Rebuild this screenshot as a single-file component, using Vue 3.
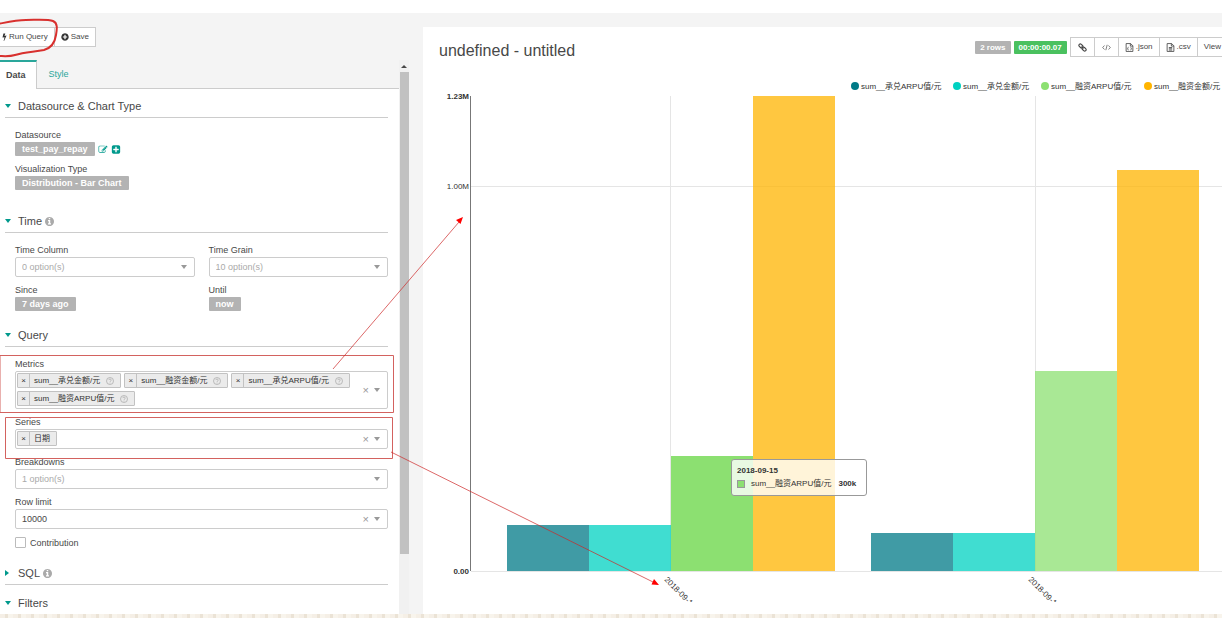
<script setup>
import { ref } from 'vue'

const metrics = ref(['sum__承兑金额/元', 'sum__融资金额/元', 'sum__承兑ARPU值/元', 'sum__融资ARPU值/元'])
const series = ref(['日期'])
const contribution = ref(false)

const legend = [
  { name: 'sum__承兑ARPU值/元', color: '#007a87', x: 432 },
  { name: 'sum__承兑金额/元', color: '#00d1c1', x: 534 },
  { name: 'sum__融资ARPU值/元', color: '#8ce071', x: 622 },
  { name: 'sum__融资金额/元', color: '#ffb400', x: 725 },
]

const baseline = 509
const barWidth = 82
const groups = [
  { x: 84, date: '2018-09-15', heights: [46, 46, 115, 475] },
  { x: 448, date: '2018-09-14', heights: [38, 38, 200, 401] },
]
const hovered = { group: 0, bar: 2 }

const icons = {
  bolt: 'M1333 566q18 20 7 44l-540 1157q-13 25-42 25-4 0-14-2-17-5-25.5-19t-4.5-30l197-808-406 101q-4 1-12 1-18 0-31-11-18-15-13-39l201-825q4-16 18-26t32-10h328q19 0 32 12.5t13 29.5q0 8-5 18l-171 463 396-98q8-2 12-2 19 0 34 15z',
  info: 'M1152 1376v-160q0-14-9-23t-23-9h-96v-512q0-14-9-23t-23-9h-320q-14 0-23 9t-9 23v160q0 14 9 23t23 9h96v320h-96q-14 0-23 9t-9 23v160q0 14 9 23t23 9h448q14 0 23-9t9-23zm-128-896v-160q0-14-9-23t-23-9h-192q-14 0-23 9t-9 23v160q0 14 9 23t23 9h192q14 0 23-9t9-23zm640 416q0 209-103 385.5t-279.5 279.5-385.5 103-385.5-103-279.5-279.5-103-385.5 103-385.5 279.5-279.5 385.5-103 385.5 103 279.5 279.5 103 385.5z',
  plusCircle: 'M1344 960v-128q0-26-19-45t-45-19h-256v-256q0-26-19-45t-45-19h-128q-26 0-45 19t-19 45v256h-256q-26 0-45 19t-19 45v128q0 26 19 45t45 19h256v256q0 26 19 45t45 19h128q26 0 45-19t19-45v-256h256q26 0 45-19t19-45zm320-64q0 209-103 385.5t-279.5 279.5-385.5 103-385.5-103-279.5-279.5-103-385.5 103-385.5 279.5-279.5 385.5-103 385.5 103 279.5 279.5 103 385.5z',
  edit: 'M888 1184l116-116-152-152-116 116v56h96v96h56zm440-720q-16-16-33 1l-350 350q-17 17-1 33t33-1l350-350q17-17 1-33zm80 594v190q0 119-84.5 203.5t-203.5 84.5h-832q-119 0-203.5-84.5t-84.5-203.5v-832q0-119 84.5-203.5t203.5-84.5h832q63 0 117 25 15 7 18 23 3 17-9 29l-49 49q-14 14-32 8-23-6-45-6h-832q-66 0-113 47t-47 113v832q0 66 47 113t113 47h832q66 0 113-47t47-113v-126q0-13 9-22l64-64q15-15 35-7t20 29zm-96-738l288 288-672 672h-288v-288zm444 132l-92 92-288-288 92-92q28-28 68-28t68 28l152 152q28 28 28 68t-28 68z',
  plusSquare: 'M1408 960v-128q0-26-19-45t-45-19h-320v-320q0-26-19-45t-45-19h-128q-26 0-45 19t-19 45v320h-320q-26 0-45 19t-19 45v128q0 26 19 45t45 19h320v320q0 26 19 45t45 19h128q26 0 45-19t19-45v-320h320q26 0 45-19t19-45zm256-544v960q0 119-84.5 203.5t-203.5 84.5h-960q-119 0-203.5-84.5t-84.5-203.5v-960q0-119 84.5-203.5t203.5-84.5h960q119 0 203.5 84.5t84.5 203.5z',
}
</script>

<template>
  <div class="page">
    <div class="topbar"></div>
    <main class="explore">
      <aside class="sidebar">
        <div class="actions">
          <button class="btn run" type="button">
            <svg class="ico small" viewBox="400 0 1000 1792"><path :d="icons.bolt" /></svg>Run Query
          </button>
          <button class="btn save" type="button">
            <svg class="ico" viewBox="64 64 1664 1664"><path :d="icons.plusCircle" /></svg>Save
          </button>
        </div>

        <div class="panel-wrap">
          <div class="panel">
            <nav class="tabs">
              <a class="tab active" href="#data">Data</a>
              <a class="tab" href="#style">Style</a>
            </nav>

            <section class="section first">
              <h2 class="heading"><i class="caret"></i>Datasource &amp; Chart Type</h2>
              <div class="fields">
                <div class="field">
                  <div class="label">Datasource</div>
                  <div class="badge-row">
                    <button class="badge" type="button">test_pay_repay</button>
                    <a class="icon-link" href="#edit" aria-label="Edit datasource"><svg viewBox="0 0 1792 1792"><path :d="icons.edit" /></svg></a>
                    <a class="icon-link" href="#add" aria-label="Add datasource"><svg viewBox="64 64 1664 1664"><path :d="icons.plusSquare" /></svg></a>
                  </div>
                </div>
                <div class="field">
                  <div class="label">Visualization Type</div>
                  <div class="badge-row"><button class="badge" type="button">Distribution - Bar Chart</button></div>
                </div>
              </div>
            </section>

            <section class="section">
              <h2 class="heading"><i class="caret"></i>Time<svg class="info" viewBox="128 128 1536 1536"><path :d="icons.info" /></svg></h2>
              <div class="fields two">
                <div class="field">
                  <label class="label" for="time-column">Time Column</label>
                  <div class="control">
                    <select id="time-column" class="muted"><option>0 option(s)</option></select>
                    <i class="arrow"></i>
                  </div>
                </div>
                <div class="field">
                  <label class="label" for="time-grain">Time Grain</label>
                  <div class="control">
                    <select id="time-grain" class="muted"><option>10 option(s)</option></select>
                    <i class="arrow"></i>
                  </div>
                </div>
                <div class="field">
                  <div class="label">Since</div>
                  <div class="badge-row"><button class="badge" type="button">7 days ago</button></div>
                </div>
                <div class="field">
                  <div class="label">Until</div>
                  <div class="badge-row"><button class="badge" type="button">now</button></div>
                </div>
              </div>
            </section>

            <section class="section">
              <h2 class="heading"><i class="caret"></i>Query</h2>
              <div class="fields">
                <div class="field">
                  <label class="label" for="metrics">Metrics</label>
                  <div class="control">
                    <div class="tags">
                      <span v-for="m in metrics" :key="m" class="tag">
                        <button class="remove" type="button" :aria-label="'Remove ' + m" @click="metrics = metrics.filter(x => x !== m)">×</button>
                        <span class="tag-text">{{ m }}</span>
                        <svg class="help" viewBox="0 0 16 16"><circle cx="8" cy="8" r="7" /><path d="M5.5 6.2C5.7 3.2 10.500 3.500 10.500 6.200C10.500 8 8 7.800 8 9.800M8 11.200V12.800" /></svg>
                      </span>
                      <input id="metrics" class="entry" type="text" />
                    </div>
                    <button class="clear" type="button" aria-label="Clear metrics" @click="metrics = []">×</button>
                    <i class="arrow"></i>
                  </div>
                </div>
                <div class="field">
                  <label class="label" for="series">Series</label>
                  <div class="control">
                    <div class="tags">
                      <span v-for="s in series" :key="s" class="tag">
                        <button class="remove" type="button" :aria-label="'Remove ' + s" @click="series = []">×</button>
                        <span class="tag-text">{{ s }}</span>
                      </span>
                      <input id="series" class="entry" type="text" />
                    </div>
                    <button class="clear" type="button" aria-label="Clear series" @click="series = []">×</button>
                    <i class="arrow"></i>
                  </div>
                </div>
                <div class="field">
                  <label class="label" for="breakdowns">Breakdowns</label>
                  <div class="control">
                    <select id="breakdowns" class="muted"><option>1 option(s)</option></select>
                    <i class="arrow"></i>
                  </div>
                </div>
                <div class="field">
                  <label class="label" for="row-limit">Row limit</label>
                  <div class="control">
                    <select id="row-limit"><option>10000</option></select>
                    <button class="clear" type="button" aria-label="Clear row limit">×</button>
                    <i class="arrow"></i>
                  </div>
                </div>
                <label class="check"><input v-model="contribution" type="checkbox" />Contribution</label>
              </div>
            </section>

            <section class="section closed">
              <h2 class="heading"><i class="caret right"></i>SQL<svg class="info" viewBox="128 128 1536 1536"><path :d="icons.info" /></svg></h2>
            </section>
            <section class="section closed">
              <h2 class="heading last"><i class="caret"></i>Filters</h2>
            </section>
          </div>
          <div class="scrollbar">
            <div class="scroll-up"><i></i></div>
            <div class="thumb"></div>
          </div>
        </div>
      </aside>

      <section class="chart-panel">
        <header class="chart-head">
          <h1>undefined - untitled</h1>
          <div class="tools">
            <span class="pill">2 rows</span>
            <span class="pill ok">00:00:00.07</span>
            <div class="group">
              <button class="btn" type="button" aria-label="Link">
                <svg class="line-ico bold" viewBox="0 0 16 16"><g transform="rotate(45 8 8)"><rect x="0" y="5.500" width="8" height="5" rx="2.500" /><rect x="8" y="5.500" width="8" height="5" rx="2.500" /><path d="M5.500 8H10.500" /></g></svg>
              </button>
              <button class="btn" type="button" aria-label="Embed">
                <svg class="line-ico" viewBox="0 0 20 16"><path d="M5.500 3.500L1.500 8L5.500 12.500M14.500 3.500L18.500 8L14.500 12.500M11.500 2L8.500 14" /></svg>
              </button>
              <button class="btn text" type="button">
                <svg class="line-ico" viewBox="0 0 16 16"><path d="M2 1H10L14 5V15H2ZM9.500 1V5.500H14M6 7.500C4.500 7.500 6 10 4.500 10C6 10 4.500 12.500 6 12.500M10 7.500C11.500 7.500 10 10 11.500 10C10 10 11.500 12.500 10 12.500" /></svg>.json
              </button>
              <button class="btn text" type="button">
                <svg class="line-ico" viewBox="0 0 16 16"><path d="M2 1H10L14 5V15H2ZM9.500 1V5.500H14M5 8H11M5 10.300H11M5 12.600H11" /></svg>.csv
              </button>
              <button class="btn text" type="button">View</button>
            </div>
          </div>
        </header>

        <div class="chart">
          <svg class="plot" viewBox="0 0 799 540">
            <g>
              <g v-for="l in legend" :key="l.name">
                <circle :cx="l.x" cy="24" r="4" :fill="l.color" />
                <text :x="l.x + 6" y="27">{{ l.name }}</text>
              </g>
            </g>
            <g class="grid">
              <path d="M48 124.500H799M247.500 34V509M612.500 34V509M48 509.500H799" />
            </g>
            <path class="axis" d="M47.500 34V509" />
            <g class="ticks">
              <text class="strong" x="46" y="37">1.23M</text>
              <text x="46" y="127">1.00M</text>
              <text class="strong" x="46" y="512">0.00</text>
            </g>
            <g v-for="(g, gi) in groups" :key="g.date">
              <rect
                v-for="(h, bi) in g.heights"
                :key="bi"
                :x="g.x + bi * barWidth"
                :y="baseline - h"
                :width="barWidth"
                :height="h"
                :fill="legend[bi].color"
                :fill-opacity="gi === hovered.group && bi === hovered.bar ? 1 : 0.75"
              />
              <text class="date" :transform="`translate(${g.x + 159} 516) rotate(45)`" y="3">{{ g.date }}</text>
            </g>
          </svg>
          <div class="tooltip">
            <strong>2018-09-15</strong>
            <div class="tip-row"><i></i><span>sum__融资ARPU值/元</span><strong>300k</strong></div>
          </div>
        </div>
      </section>
    </main>
    <footer class="edge"></footer>

    <svg class="marks" aria-hidden="true">
      <path class="pen" d="M-2 24C8 22 16 20 26 20C36 20 48 19 53 21C58 23 57 29 56 35C55 42 51 48 44 50C33 52 24 52 15 55C9 57 3 56 -2 56" />
      <path class="box" d="M0 355.500H393.500V412.500H0ZM5.500 417.500H392.500V458.500H5.500Z" />
      <path class="pointer" d="M333 369L459 222M391 452L653 582" />
      <path class="head" d="M463 217L460.500 224L456 220ZM659 585L651.500 584.500L654 579Z" />
    </svg>
  </div>
</template>

<style>
body {
  margin: 0;
}
</style>

<style scoped>
* {
  box-sizing: border-box;
}
.page {
  position: relative;
  display: flex;
  flex-direction: column;
  min-height: 100vh;
  overflow: hidden;
  background: #f4f4f4;
  color: #484848;
  font: 9px/12px "Liberation Sans", "Noto Sans CJK SC", sans-serif;
}
button,
input,
select {
  margin: 0;
  font: inherit;
  color: inherit;
}
.topbar {
  height: 13px;
  background: #fff;
}
.explore {
  flex: 1;
  display: flex;
  gap: 14px;
}
.sidebar {
  flex: 0 0 409px;
  display: flex;
  flex-direction: column;
  padding-top: 14px;
}
.actions {
  display: flex;
}
.btn {
  display: flex;
  align-items: center;
  gap: 2px;
  height: 20px;
  padding: 0 7px;
  border: 1px solid #ccc;
  background: #fff;
  font-size: 8px;
  white-space: nowrap;
}
.btn.text {
  padding: 0 6px;
}
.run {
  border-left: 0;
  padding: 0 6px 0 2px;
}
.save {
  margin-left: -1px;
  padding: 0 6px;
}
.ico {
  width: 8px;
  height: 8px;
  fill: #333;
}
.ico.small {
  width: 5px;
}
.panel-wrap {
  flex: 1;
  display: flex;
  margin-top: 13px;
}
.panel {
  flex: 1;
  background: #fff;
}
.tabs {
  display: flex;
  height: 29px;
  background: #f4f4f4;
  border-bottom: 1px solid #ccc;
}
.tab {
  padding: 8px 12px;
  color: #2aa79b;
  text-decoration: none;
}
.tab.active {
  height: 29px;
  padding: 7px 10px 0 6px;
  border-top: 2px solid #2aa79b;
  border-right: 1px solid #ccc;
  background: #fff;
  color: #484848;
  font-weight: bold;
}
.section {
  padding: 0 11px 16px 5px;
}
.section.first {
  padding-top: 9px;
  padding-bottom: 23px;
}
.section.closed {
  padding-bottom: 10px;
}
.section.closed:last-child {
  padding-bottom: 0;
}
.heading {
  display: flex;
  align-items: center;
  margin: 0;
  padding-bottom: 3px;
  border-bottom: 1px solid #ccc;
  font-size: 11px;
  line-height: 16px;
  font-weight: normal;
}
.heading.last {
  border: 0;
}
.caret {
  width: 6px;
  margin-right: 7px;
  border: 3px solid transparent;
  border-top: 4px solid #00998c;
  border-bottom: 0;
}
.caret.right {
  width: 4px;
  margin-right: 9px;
  border: 3px solid transparent;
  border-left: 4px solid #00998c;
  border-right: 0;
}
.info {
  width: 9px;
  height: 9px;
  margin-left: 3px;
  fill: #aaa;
}
.fields {
  display: grid;
  gap: 7px 14px;
  padding: 11px 0 0 10px;
}
.fields.two {
  grid-template-columns: 1fr 1fr;
}
.label {
  display: block;
  margin-bottom: 1px;
}
.badge-row {
  display: flex;
  align-items: center;
  gap: 3px;
}
.badge {
  height: 14px;
  padding: 0 7px;
  border: 0;
  border-radius: 1px;
  background: #b3b3b3;
  color: #fff;
  font-weight: bold;
  line-height: 14px;
}
.icon-link {
  display: flex;
}
.icon-link svg {
  width: 10px;
  height: 9px;
  fill: #00998c;
}
.control {
  display: flex;
  align-items: center;
  min-height: 20px;
  padding-right: 7px;
  border: 1px solid #ccc;
  border-radius: 2px;
  background: #fff;
}
.control select {
  flex: 1;
  height: 18px;
  padding: 0 6px;
  border: 0;
  background: none;
  appearance: none;
}
.control select.muted {
  color: #aaa;
}
.arrow {
  border: 3px solid transparent;
  border-top: 4px solid #999;
  border-bottom: 0;
}
.clear {
  padding: 0 5px 0 0;
  border: 0;
  background: none;
  color: #999;
  font-size: 11px;
}
.tags {
  flex: 1;
  display: flex;
  flex-wrap: wrap;
  gap: 3px;
  padding: 1px 1px 2px;
}
.tag {
  display: flex;
  align-items: center;
  height: 15px;
  padding-right: 6px;
  border: 1px solid #c2c2c2;
  border-radius: 1px;
  background: #ebebeb;
  color: #333;
  font-size: 8px;
}
.remove {
  width: 12px;
  height: 13px;
  padding: 0;
  border: 0;
  border-right: 1px solid #c2c2c2;
  background: none;
  line-height: 12px;
}
.tag-text {
  padding-left: 4px;
  white-space: nowrap;
}
.help {
  width: 8px;
  height: 8px;
  margin-left: 6px;
  fill: none;
  stroke: #aaa;
  stroke-width: 1.5;
}
.entry {
  width: 10px;
  height: 15px;
  padding: 0;
  border: 0;
  outline: 0;
  background: none;
}
.check {
  display: flex;
  align-items: center;
  gap: 4px;
  height: 13px;
}
.check input {
  width: 11px;
  height: 11px;
  border: 1px solid #bbb;
  border-radius: 1px;
  background: #fff;
  appearance: none;
}
.check input:checked {
  background: #00998c;
}
.scrollbar {
  flex: 0 0 10px;
  display: flex;
  flex-direction: column;
  background: #f1f1f1;
}
.scroll-up {
  display: flex;
  justify-content: center;
  align-items: center;
  height: 12px;
}
.scroll-up i {
  border: 3px solid transparent;
  border-top: 0;
  border-bottom-color: #484848;
}
.thumb {
  height: 87%;
  margin-left: 1px;
  background: #c1c1c1;
}
.chart-panel {
  flex: 1;
  min-width: 0;
  margin-top: 14px;
  overflow: hidden;
  background: #fff;
}
.chart-head {
  display: flex;
  justify-content: space-between;
  height: 35px;
  padding: 10px 0 0 16px;
}
h1 {
  margin: 4px 0 0;
  font-size: 16px;
  line-height: 20px;
  font-weight: normal;
}
.tools {
  display: flex;
  align-items: center;
  gap: 3px;
  height: 20px;
  margin-right: -6px;
}
.pill {
  padding: 0 5px;
  border-radius: 1px;
  background: #b3b3b3;
  color: #fff;
  font-size: 8px;
  line-height: 13px;
  font-weight: bold;
  white-space: nowrap;
}
.pill.ok {
  background: #4ac15f;
}
.group {
  display: flex;
}
.group .btn + .btn {
  margin-left: -1px;
}
.line-ico {
  width: 9px;
  height: 9px;
  fill: none;
  stroke: #484848;
  stroke-width: 1.5;
}
.line-ico.bold {
  stroke-width: 2;
}
.chart {
  position: relative;
}
.plot {
  display: block;
  width: 100%;
}
.plot text {
  font-size: 8px;
  fill: #333;
}
.grid path {
  fill: none;
  stroke: #e5e5e5;
}
.axis {
  stroke: #777;
}
.ticks text {
  text-anchor: end;
}
.plot .strong {
  font-weight: bold;
}
.tooltip {
  position: absolute;
  left: 308px;
  top: 397px;
  padding: 4px 10px 5px 5px;
  border: 1px solid #999;
  border-radius: 3px;
  background: rgba(255, 255, 255, 0.8);
  color: #333;
  font-size: 8px;
  line-height: 13px;
}
.tip-row {
  display: flex;
  align-items: center;
  white-space: nowrap;
}
.tip-row i {
  width: 8px;
  height: 8px;
  margin-right: 6px;
  border: 1px solid #999;
  background: #8ce071;
}
.tip-row strong {
  margin-left: 7px;
}
.edge {
  height: 4px;
  background: repeating-linear-gradient(90deg, #f5efe6 0 5px, #ebe3d6 5px 8px, #f8f4ec 8px 13px);
}
.marks {
  position: absolute;
  inset: 0;
  width: 100%;
  height: 100%;
  fill: none;
  pointer-events: none;
}
.pen {
  stroke: #d8302e;
  stroke-width: 2;
}
.box {
  stroke: #d3625f;
}
.pointer {
  stroke: rgba(205, 40, 40, 0.7);
}
.head {
  fill: #f00;
}
</style>
